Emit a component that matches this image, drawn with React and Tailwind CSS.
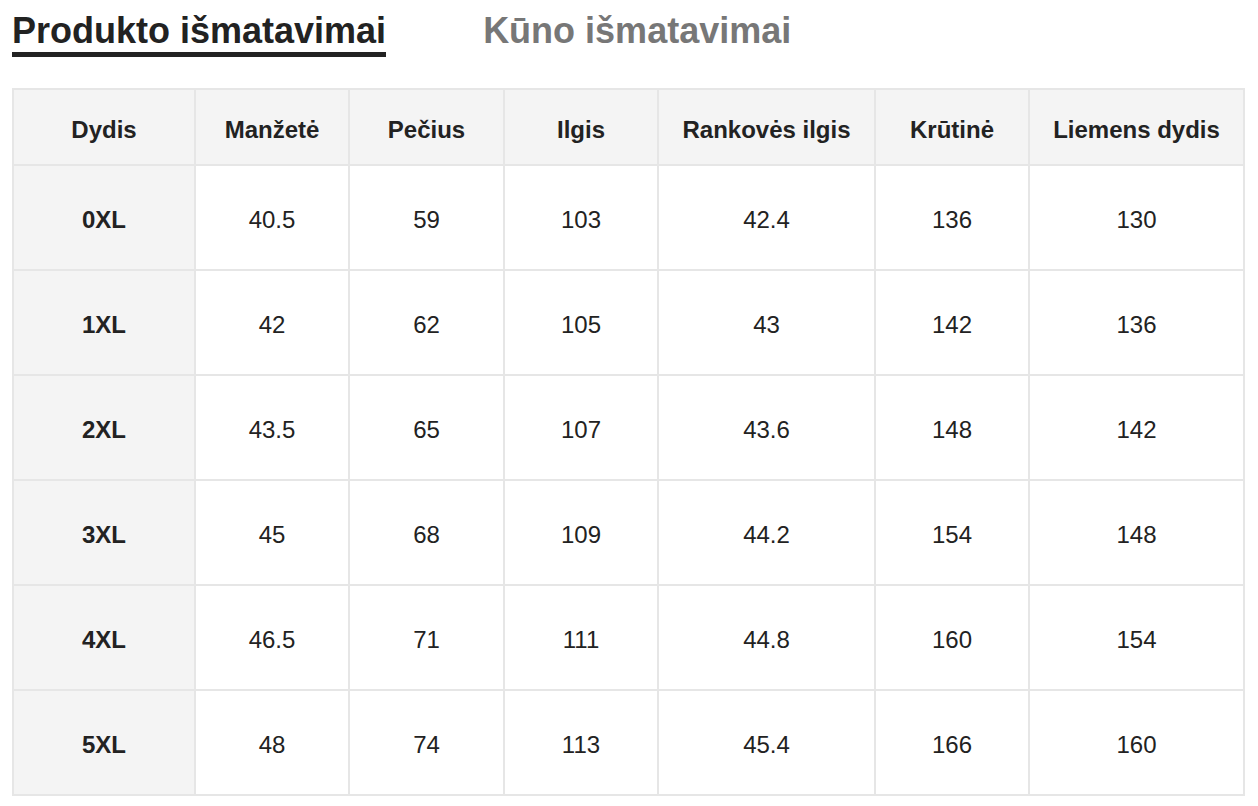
import React from "react";

const headers = ["Dydis", "Manžetė", "Pečius", "Ilgis", "Rankovės ilgis", "Krūtinė", "Liemens dydis"];
const widths = [182, 154, 155, 154, 217, 154, 215];
const rows = [
  ["0XL", "40.5", "59", "103", "42.4", "136", "130"],
  ["1XL", "42", "62", "105", "43", "142", "136"],
  ["2XL", "43.5", "65", "107", "43.6", "148", "142"],
  ["3XL", "45", "68", "109", "44.2", "154", "148"],
  ["4XL", "46.5", "71", "111", "44.8", "160", "154"],
  ["5XL", "48", "74", "113", "45.4", "166", "160"],
];

export default function App() {
  return (
    <div className="bg-white w-[1258px] h-[806px] overflow-hidden" style={{ fontFamily: '"Liberation Sans", Arial, sans-serif' }}>
      <div className="flex items-start pl-[12px] pt-[10px]">
        <div className="text-[36px] leading-[41px] font-bold text-[#222] border-b-[5px] border-[#222] pb-[1px]">
          Produkto išmatavimai
        </div>
        <div className="ml-[97px] text-[36px] leading-[41px] font-bold text-[#777]">Kūno išmatavimai</div>
      </div>
      <div className="pl-[12px] pt-[31px]">
        <table className="table-fixed border-collapse border-2 border-[#e6e6e6] w-[1231px] text-[#222]">
          <colgroup>
            {widths.map((w, i) => (
              <col key={i} style={{ width: w }} />
            ))}
          </colgroup>
          <thead>
            <tr className="h-[76px] bg-[#f4f4f4]">
              {headers.map((h) => (
                <th key={h} className="border-2 border-[#e6e6e6] text-[24px] font-bold text-center align-middle px-0 pb-0 pt-[6px]">
                  {h}
                </th>
              ))}
            </tr>
          </thead>
          <tbody>
            {rows.map((r) => (
              <tr key={r[0]} className="h-[105px]">
                {r.map((c, i) => (
                  <td
                    key={i}
                    className={
                      i === 0
                        ? "border-2 border-[#e6e6e6] bg-[#f4f4f4] text-[24px] font-bold text-center align-middle px-0 pb-0 pt-[4px]"
                        : "border-2 border-[#e6e6e6] bg-white text-[24px] text-center align-middle px-0 pb-0 pt-[4px]"
                    }
                  >
                    {c}
                  </td>
                ))}
              </tr>
            ))}
          </tbody>
        </table>
      </div>
    </div>
  );
}
